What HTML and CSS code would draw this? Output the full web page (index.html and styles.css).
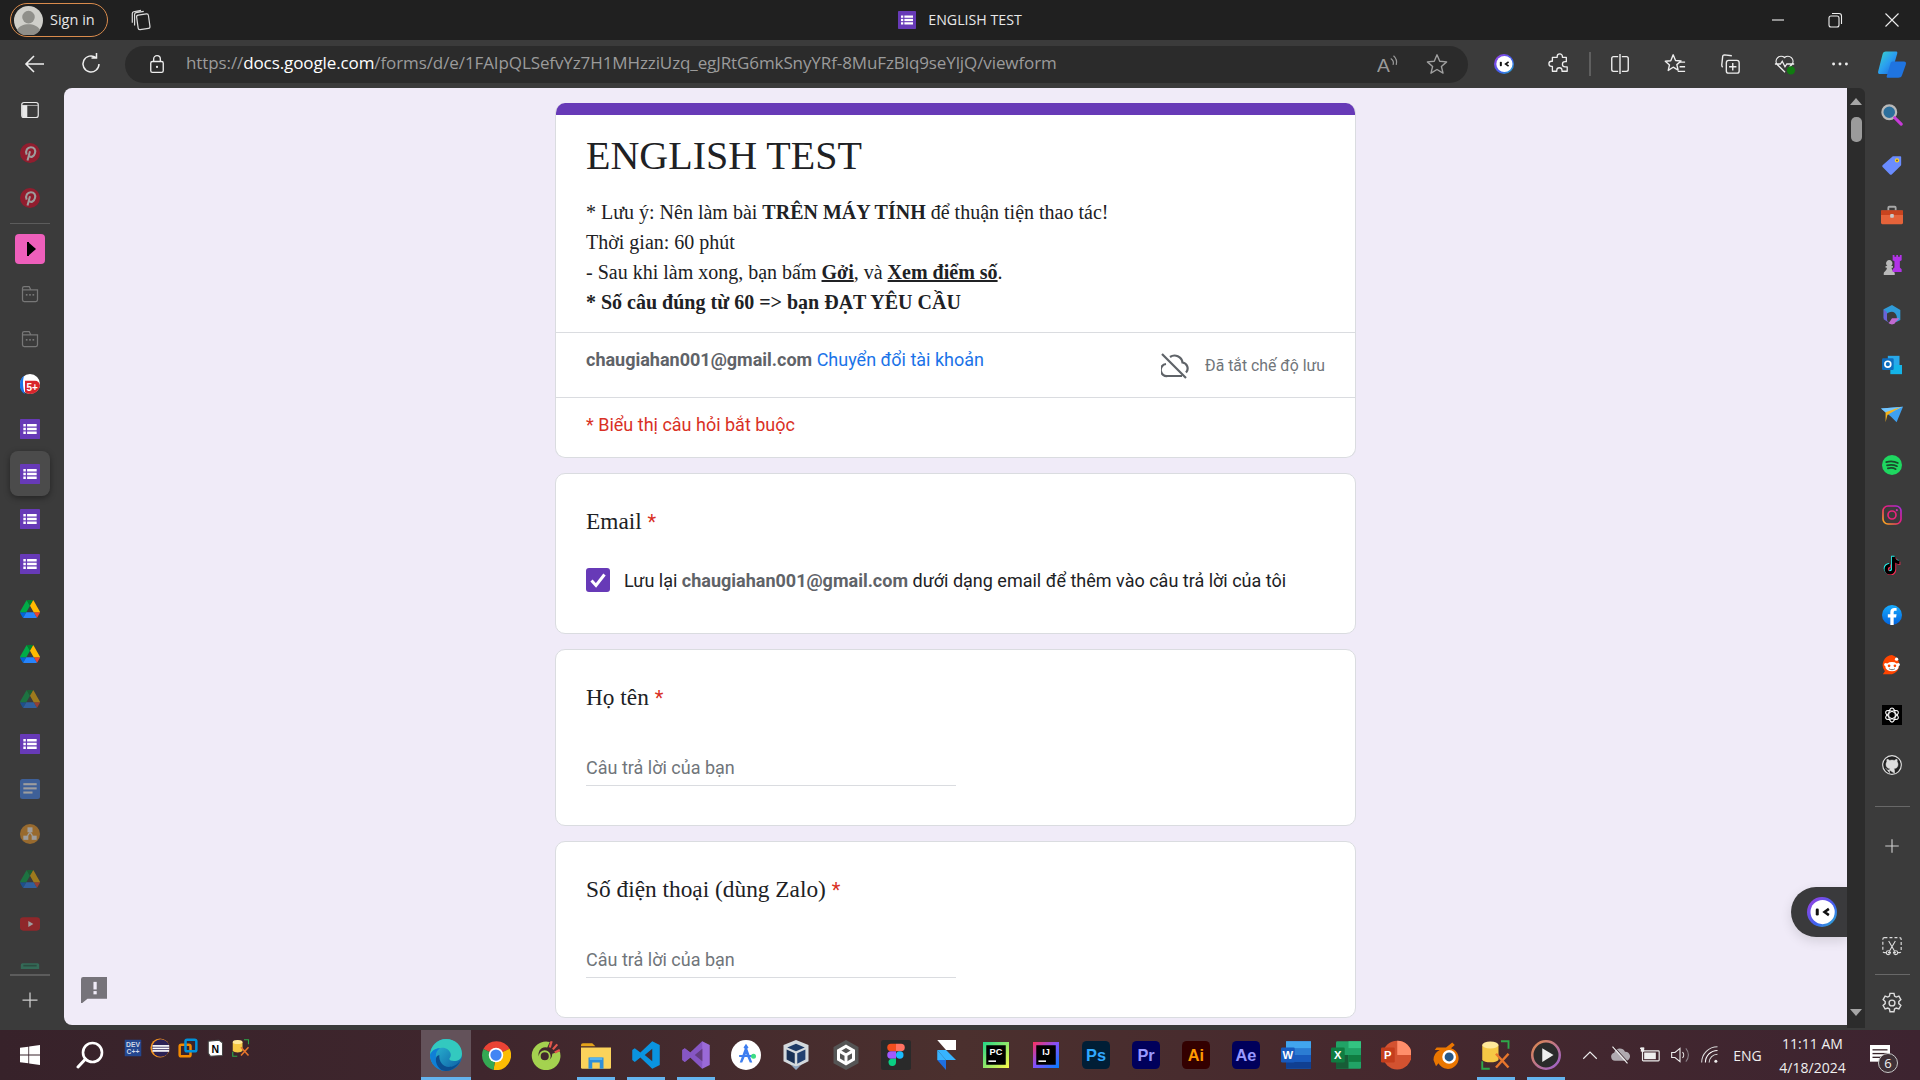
FILE: index.html
```html
<!DOCTYPE html>
<html lang="vi">
<head>
<meta charset="utf-8">
<title>ENGLISH TEST</title>
<link rel="stylesheet" href="styles.css">
</head>
<body>
<svg class="defs" aria-hidden="true">
<defs>
<linearGradient id="gEdge" x1="0" y1="0" x2="1" y2="1"><stop offset="0" stop-color="#2fc7d8"/><stop offset="1" stop-color="#0c59a4"/></linearGradient>
<linearGradient id="gCop" x1="0" y1="0" x2="1" y2="1"><stop offset="0" stop-color="#3ad6c8"/><stop offset=".5" stop-color="#2a9ef0"/><stop offset="1" stop-color="#1b5fd6"/></linearGradient>
<linearGradient id="gMas" x1="0" y1="0" x2="1" y2="1"><stop offset="0" stop-color="#a23ce0"/><stop offset=".6" stop-color="#3d62f0"/><stop offset="1" stop-color="#27b7c9"/></linearGradient>
<linearGradient id="gInsta" x1="0" y1="1" x2="1" y2="0"><stop offset="0" stop-color="#fdb913"/><stop offset=".5" stop-color="#ee1d79"/><stop offset="1" stop-color="#a32ce0"/></linearGradient>
<linearGradient id="gFb" x1="0" y1="0" x2="0" y2="1"><stop offset="0" stop-color="#18acfe"/><stop offset="1" stop-color="#0163e0"/></linearGradient>
<linearGradient id="gPC" x1="0" y1="0" x2="1" y2="1"><stop offset="0" stop-color="#21d789"/><stop offset="1" stop-color="#fcf84a"/></linearGradient>
<linearGradient id="gIJ" x1="0" y1="0" x2="1" y2="1"><stop offset="0" stop-color="#fe315d"/><stop offset=".5" stop-color="#7f52ff"/><stop offset="1" stop-color="#007efc"/></linearGradient>
<linearGradient id="gPlay" x1="0" y1="0" x2="1" y2="1"><stop offset="0" stop-color="#e08a4a"/><stop offset="1" stop-color="#9a5fd0"/></linearGradient>

<symbol id="i-forms" viewBox="0 0 24 24"><rect width="24" height="24" rx="1" fill="#673ab7"/><g fill="#fff"><rect x="4" y="6" width="3" height="3"/><rect x="4" y="10.500" width="3" height="3"/><rect x="4" y="15" width="3" height="3"/><rect x="8.500" y="6" width="11.500" height="3"/><rect x="8.500" y="10.500" width="11.500" height="3"/><rect x="8.500" y="15" width="11.500" height="3"/></g></symbol>
<symbol id="i-pin" viewBox="0 0 24 24"><circle cx="12" cy="12" r="12" fill="#e60023"/><path d="M9 21l3-11M8 14c-2-5 1-9 5-9s6 3 5 7-5 6-6.500 3.500" fill="none" stroke="#fff" stroke-width="2.400"/></symbol>
<symbol id="i-play" viewBox="0 0 30 30"><rect width="30" height="30" rx="4" fill="#ee5fbb"/><path d="M13 8l8 7-8 7z" fill="#000"/><rect x="12" y="8" width="2" height="14"/></symbol>
<symbol id="i-group" viewBox="0 0 24 24"><path d="M3 7V5a2 2 0 0 1 2-2h6l2 4h8v12a2 2 0 0 1-2 2H5a2 2 0 0 1-2-2V7h10" fill="none" stroke="#777" stroke-width="1.500"/><g fill="#777"><rect x="7" y="12" width="2" height="2"/><rect x="11" y="12" width="2" height="2"/><rect x="15" y="12" width="2" height="2"/></g></symbol>
<symbol id="i-vtabs" viewBox="0 0 24 24"><rect x="1" y="2" width="22" height="20" rx="3" fill="none" stroke="#e8e8e8" stroke-width="1.600"/><path d="M1.500 6H8v15.500H4A2.500 2.500 0 0 1 1.500 19zM1.500 6h21" fill="#e8e8e8" stroke="#e8e8e8" stroke-width=".8"/></symbol>
<symbol id="i-badge" viewBox="0 0 24 24"><circle cx="12" cy="12" r="12" fill="#fff"/><path d="M0 12a12 12 0 0 1 5-10c-2 5-2 14 1 22a12 12 0 0 1-6-12z" fill="#1a73e8"/><path d="M6 8h12a6 6 0 0 1 6 6 12 12 0 0 1-12 10 10 10 0 0 1-6-2z" fill="#d8252c"/><text x="14.500" y="20" class="svg-b" font-size="12" fill="#fff" text-anchor="middle">5+</text></symbol>
<symbol id="i-drive" viewBox="0 0 87.300 78"><path d="m6.600 66.850 3.850 6.650c.8 1.400 1.950 2.500 3.300 3.300l13.750-23.800h-27.500c0 1.550.4 3.100 1.200 4.500z" fill="#0066da"/><path d="m43.650 25-13.750-23.800c-1.350.8-2.500 1.900-3.300 3.300l-25.400 44a9.060 9.060 0 0 0 -1.200 4.500h27.500z" fill="#00ac47"/><path d="m73.550 76.800c1.350-.8 2.500-1.900 3.300-3.300l1.600-2.750 7.650-13.250c.8-1.400 1.200-2.950 1.200-4.500h-27.502l5.852 11.500z" fill="#ea4335"/><path d="m43.650 25 13.750-23.800c-1.350-.8-2.900-1.200-4.500-1.200h-18.500c-1.600 0-3.150.45-4.500 1.200z" fill="#00832d"/><path d="m59.800 53h-32.300l-13.750 23.800c1.350.8 2.900 1.200 4.500 1.200h50.800c1.600 0 3.150-.45 4.500-1.200z" fill="#2684fc"/><path d="m73.400 26.500-12.700-22c-.8-1.400-1.950-2.500-3.300-3.300l-13.750 23.800 16.150 28h27.450c0-1.550-.4-3.100-1.200-4.500z" fill="#ffba00"/></symbol>
<symbol id="i-docs" viewBox="0 0 24 24"><rect width="24" height="24" rx="3" fill="#4285f4"/><g fill="#fff"><rect x="4" y="5" width="16" height="2.500"/><rect x="4" y="10" width="16" height="2.500"/><rect x="4" y="15" width="11" height="2.500"/></g></symbol>
<symbol id="i-nodes" viewBox="0 0 24 24"><circle cx="12" cy="12" r="12" fill="#f59a23"/><g fill="#fff"><rect x="9" y="4" width="6" height="6"/><rect x="4" y="14" width="6" height="5"/><rect x="14" y="14" width="6" height="5"/><path d="M11 10h2l3 4h-2l-2-3-2 3H8z"/></g></symbol>
<symbol id="i-yt" viewBox="0 0 24 24"><rect y="4" width="24" height="16" rx="4" fill="#e3141b"/><path d="M10 8.500l6 3.500-6 3.500z" fill="#fff"/></symbol>
<symbol id="i-green" viewBox="0 0 24 24"><rect x="1" y="5" width="22" height="17" rx="2" fill="#2f9a74"/><rect x="4" y="7" width="16" height="2" fill="#1c5e46"/></symbol>

<symbol id="r-search" viewBox="0 0 24 24"><circle cx="9" cy="9" r="7.500" fill="#2c6f9c" stroke="#b9b9b9" stroke-width="2.400"/><path d="M15 15l7 7" stroke="#c73ad8" stroke-width="3.400" stroke-linecap="round"/></symbol>
<symbol id="r-tag" viewBox="0 0 24 24"><path d="M13 1.500h9a1 1 0 0 1 1 1v9a2 2 0 0 1-.6 1.400L12 23a2 2 0 0 1-2.800 0L1 14.800a2 2 0 0 1 0-2.800z" fill="#6a8cff"/><circle cx="18" cy="6.500" r="2.500" fill="#ffd21e"/><circle cx="18" cy="6.500" r="1" fill="#444"/></symbol>
<symbol id="r-tool" viewBox="0 0 24 24"><path d="M8 7V4a1 1 0 0 1 1-1h6a1 1 0 0 1 1 1v3" fill="none" stroke="#a8a8a8" stroke-width="2"/><rect y="7" width="24" height="15" rx="1.500" fill="#e5633a"/><rect y="7" width="24" height="5" fill="#c8441f"/><rect x="10" y="11" width="4" height="4" rx="1" fill="#c9c9c9"/></symbol>
<symbol id="r-chess" viewBox="0 0 24 24"><path d="M3 23v-2c0-2 3-2 3.500-6H5v-2h2a3.500 3.500 0 1 1 4 0h2v2h-1.500c.5 4 3.500 4 3.500 6v2z" fill="#b9b9b9"/><path d="M14 1h2v2h2V1h2v2h2V1h2v6l-2 1v7l2 2v3H14v-3l2-2V8l-2-1z" fill="#b233e8" transform="translate(-1 0) scale(.98)"/></symbol>
<symbol id="r-m365" viewBox="0 0 24 24"><path d="M12 0l10 6v12l-6 3c3-3 3-12-4-13-3 0-5 1-7 3l-3 5V5z" fill="#2f9bd8"/><path d="M2 5v12l6 4c3 2 5 3 8 0H9c-3-1-3-3-3-5V9z" fill="#6a62d8"/><path d="M16 21c-2 3-5 3-8 1l4-6h9z" fill="#c06ad0"/></symbol>
<symbol id="r-outlook" viewBox="0 0 24 24"><rect x="7" y="1" width="14" height="14" fill="#28a8ea"/><path d="M10 12l14 0v11H10z" fill="#14b4e8"/><rect y="4" width="14" height="14" rx="1.500" fill="#0f6cbd"/><circle cx="7" cy="11" r="3.500" fill="none" stroke="#fff" stroke-width="2"/></symbol>
<symbol id="r-plane" viewBox="0 0 24 24"><path d="M0 5l24-2-7 17-6-6z" fill="#3ea0f0"/><path d="M0 5l24-2L7 11z" fill="#74c6ff"/><path d="M5 9l17-6-15 9-2 8z" fill="#f5b41e"/></symbol>
<symbol id="r-spot" viewBox="0 0 24 24"><circle cx="12" cy="12" r="12" fill="#1ed760"/><g fill="none" stroke="#1a4a2a" stroke-width="2" stroke-linecap="round"><path d="M5 8.500c5-1.500 10-1 14 1.200M6 12.500c4-1 8.500-.8 12 1M7 16c3.500-.8 7-.5 9.500 1"/></g></symbol>
<symbol id="r-insta" viewBox="0 0 24 24"><rect x="1.200" y="1.200" width="21.600" height="21.600" rx="6" fill="#3b3b3b" stroke="url(#gInsta)" stroke-width="2"/><circle cx="12" cy="12" r="4.800" fill="none" stroke="#e8257b" stroke-width="2"/><circle cx="17.800" cy="6.200" r="1.300" fill="#c42fb0"/></symbol>
<symbol id="r-tiktok" viewBox="0 0 24 24"><path d="M12 2h4c0 3 2 5 5 5v4c-2 0-4-.7-5-2v8a6.500 6.500 0 1 1-6.500-6.500v4a2.500 2.500 0 1 0 2.500 2.500z" fill="#25f4ee" transform="translate(-1 -1)"/><path d="M12 2h4c0 3 2 5 5 5v4c-2 0-4-.7-5-2v8a6.500 6.500 0 1 1-6.500-6.500v4a2.500 2.500 0 1 0 2.500 2.500z" fill="#fe2c55" transform="translate(1 1)"/><path d="M12 2h4c0 3 2 5 5 5v4c-2 0-4-.7-5-2v8a6.500 6.500 0 1 1-6.500-6.500v4a2.500 2.500 0 1 0 2.500 2.500z" fill="#000"/></symbol>
<symbol id="r-fb" viewBox="0 0 24 24"><circle cx="12" cy="12" r="12" fill="url(#gFb)"/><path d="M10 24v-9H7v-4h3V8.500C10 5 12 3.500 15 3.500l2.500.2V7H16c-1.500 0-2 .8-2 2v2h3.500l-.6 4H14v9z" fill="#fff"/></symbol>
<symbol id="r-reddit" viewBox="0 0 24 24"><path d="M12 0a12 12 0 0 1 0 23H1l2.500-3.500A12 12 0 0 1 12 0z" fill="#ff4500"/><ellipse cx="12" cy="14" rx="8" ry="5.500" fill="#fff"/><circle cx="4.500" cy="11.500" r="2" fill="#fff"/><circle cx="19.500" cy="11.500" r="2" fill="#fff"/><circle cx="17.500" cy="5" r="2" fill="#fff"/><circle cx="8.500" cy="13" r="1.600" fill="#ff4500"/><circle cx="15.500" cy="13" r="1.600" fill="#ff4500"/><path d="M8.500 16.500c2 1.500 5 1.500 7 0" stroke="#555" fill="none"/></symbol>
<symbol id="r-gpt" viewBox="0 0 24 24"><rect width="24" height="24" fill="#000"/><g fill="none" stroke="#fff" stroke-width="1.300"><ellipse cx="12" cy="12" rx="4" ry="8.500"/><ellipse cx="12" cy="12" rx="4" ry="8.500" transform="rotate(60 12 12)"/><ellipse cx="12" cy="12" rx="4" ry="8.500" transform="rotate(120 12 12)"/></g></symbol>
<symbol id="r-git" viewBox="0 0 24 24"><circle cx="12" cy="12" r="11.200" fill="#222" stroke="#ddd" stroke-width="1.400"/><path d="M9 22v-4c-3 .5-4-1-4.500-2.500M15 22v-3.500c0-1-.4-1.500-.8-2 2.500-.3 5-1.200 5-5.300 0-1.200-.4-2.200-1.100-3 .1-.5.4-1.600-.1-3-1 0-2.200.6-3.200 1.300a11 11 0 0 0-5.600 0C8.200 5.800 7 5.200 6 5.200c-.5 1.400-.2 2.500-.1 3-.7.8-1.100 1.800-1.100 3 0 4 2.500 5 5 5.300-.4.400-.7 1-.8 1.500z" fill="#ddd" stroke="#ddd" stroke-width=".6"/></symbol>
<symbol id="r-snip" viewBox="0 0 24 24"><rect x="1" y="2" width="22" height="18" rx="2" fill="none" stroke="#ddd" stroke-width="1.400" stroke-dasharray="3.500 2.500"/><g fill="none" stroke="#ddd" stroke-width="1.300"><path d="M8 6l7 12M16 6L9 18"/><circle cx="7.500" cy="20" r="2.300"/><circle cx="16.500" cy="20" r="2.300"/></g></symbol>
<symbol id="r-gear" viewBox="0 0 24 24"><g fill="none" stroke="#ddd" stroke-width="1.500"><circle cx="12" cy="12" r="3.200"/><path d="M9.800 1.500h4.400l.6 3 1.800 1 2.900-1 2.200 3.800-2.300 2v2.400l2.300 2-2.200 3.800-2.900-1-1.800 1-.6 3H9.800l-.6-3-1.800-1-2.900 1-2.200-3.800 2.300-2v-2.400l-2.300-2 2.200-3.800 2.900 1 1.800-1z"/></g></symbol>
<symbol id="u-plus" viewBox="0 0 24 24"><path d="M12 3v18M3 12h18" stroke="#d0d0d0" stroke-width="1.500" fill="none"/></symbol>

<symbol id="t-tabs" viewBox="0 0 24 24"><g fill="none" stroke="#dcdcdc" stroke-width="1.300"><rect x="8" y="6" width="13" height="16" rx="2" transform="rotate(-8 14 14)"/><path d="M5 18V6c0-1 .6-1.800 1.600-2L15 2.500M2.500 15V5c0-1 .6-1.800 1.500-2l8-1.500"/></g></symbol>
<symbol id="t-back" viewBox="0 0 24 24"><path d="M21 12H3M11 4l-8 8 8 8" fill="none" stroke="#eee" stroke-width="1.600"/></symbol>
<symbol id="t-ref" viewBox="0 0 24 24"><path d="M20 12a8 8 0 1 1-3-6.300M17.500 1v5h-5" fill="none" stroke="#eee" stroke-width="1.500"/></symbol>
<symbol id="t-lock" viewBox="0 0 24 24"><path d="M8 9V6a4 4 0 0 1 8 0v3" fill="none" stroke="#eee" stroke-width="1.600"/><rect x="4.500" y="9" width="15" height="13" rx="2" fill="none" stroke="#eee" stroke-width="1.600"/><circle cx="12" cy="15.500" r="1.300" fill="#eee"/></symbol>
<symbol id="t-read" viewBox="0 0 24 24"><text x="0" y="21" class="svg-n" font-size="21" fill="#9a9a9a">A</text><path d="M15 6a6 6 0 0 1 2.500 7M18 3a10 10 0 0 1 3 10" fill="none" stroke="#9a9a9a" stroke-width="1.300"/></symbol>
<symbol id="t-star" viewBox="0 0 24 24"><path d="M12 2l3 7 7.500.7-5.700 5 1.800 7.300L12 18l-6.600 4 1.800-7.300-5.700-5L9 9z" fill="none" stroke="#a0a0a0" stroke-width="1.500" stroke-linejoin="round"/></symbol>
<symbol id="t-mascot" viewBox="0 0 24 24"><circle cx="12" cy="12" r="12" fill="url(#gMas)"/><circle cx="12.500" cy="12" r="9.700" fill="#fff"/><rect x="7" y="9.200" width="2.400" height="5.600" rx="1" fill="#111"/><path d="M17.500 9.500L14 12l3.500 2.500" fill="none" stroke="#111" stroke-width="2"/></symbol>
<symbol id="t-ext" viewBox="0 0 24 24"><path d="M9.500 6V5a3 3 0 0 1 6 0v1H20v5h-1.500a3 3 0 0 0 0 6H21v5H15v-1a3 3 0 0 0-6 0v1H4v-5.500H3a3 3 0 0 1 0-6h1V6z" fill="none" stroke="#eee" stroke-width="1.500" stroke-linejoin="round" transform="translate(1 -1) scale(.95)"/></symbol>
<symbol id="t-split" viewBox="0 0 24 24"><path d="M10 4H5a2 2 0 0 0-2 2v12a2 2 0 0 0 2 2h5M14 4h5a2 2 0 0 1 2 2v12a2 2 0 0 1-2 2h-5M12 1v22" fill="none" stroke="#eee" stroke-width="1.500"/></symbol>
<symbol id="t-fav" viewBox="0 0 24 24"><path d="M10 2l2.600 6.200 6 .5-4.600 4 1.400 6L10 15.500 4.600 19l1.400-6-4.600-4 6-.5z" fill="none" stroke="#eee" stroke-width="1.500" stroke-linejoin="round"/><path d="M17 10h6M17 15h6M15 20h8" stroke="#eee" stroke-width="1.500"/></symbol>
<symbol id="t-coll" viewBox="0 0 24 24"><path d="M14 3l-8-1a2 2 0 0 0-2 2L3 13c0 1 .4 1.800 1 2.500" fill="none" stroke="#eee" stroke-width="1.500"/><rect x="8" y="8" width="14" height="14" rx="2.500" fill="none" stroke="#eee" stroke-width="1.500"/><path d="M15 11v8M11 15h8" stroke="#eee" stroke-width="1.500"/></symbol>
<symbol id="t-health" viewBox="0 0 24 24"><path d="M12 21L3.500 12.500a5.500 5.500 0 0 1 8-7.500 5.500 5.500 0 0 1 8 7.500L17 15M1 12h6l2-3 3 6 2-3h8" fill="none" stroke="#eee" stroke-width="1.400"/><circle cx="18.500" cy="19" r="4.500" fill="#107c10"/></symbol>
<symbol id="t-dots" viewBox="0 0 24 24"><g fill="#eee"><circle cx="5" cy="12" r="1.600"/><circle cx="12" cy="12" r="1.600"/><circle cx="19" cy="12" r="1.600"/></g></symbol>
<symbol id="t-cop" viewBox="0 0 24 24"><path d="M7 2h8c1 0 1.500.5 1.200 1.500L12 18c-.5 1.500-1.500 2-3 2H2.500C1 20 .5 19 1 17.500L4.500 4C5 2.500 6 2 7 2z" fill="url(#gCop)"/><path d="M13 10h8.500c1.500 0 2 1 1.500 2.500L20 21c-.5 1.500-1.500 2-3 2H9c-1 0-1.500-.5-1.200-1.500l3-10c.3-1 1-1.500 2.200-1.500z" fill="#1f74e0"/></symbol>
<symbol id="t-min" viewBox="0 0 24 24"><path d="M6 12h12" stroke="#eee" stroke-width="1.100"/></symbol>
<symbol id="t-max" viewBox="0 0 24 24"><rect x="6" y="8" width="10" height="11" rx="2" fill="none" stroke="#eee" stroke-width="1.100"/><path d="M9 5.500h7a2.500 2.500 0 0 1 2.500 2.500v8" fill="none" stroke="#eee" stroke-width="1.100"/></symbol>
<symbol id="t-close" viewBox="0 0 24 24"><path d="M5.500 5.500l13 13M18.500 5.500l-13 13" stroke="#eee" stroke-width="1.100"/></symbol>
<symbol id="f-cloud" viewBox="0 0 28 26"><path d="M1 1l24 24M5 11A6 6 0 0 0 6.500 23H21M9 4A8 8 0 0 1 21.500 9.500 6 6 0 0 1 25 19.500" fill="none" stroke="#5f6368" stroke-width="2.200"/></symbol>
<symbol id="f-feed" viewBox="0 0 24 24"><path d="M2 0h22a1.500 1.500 0 0 1 1.500 1.500v17a1.500 1.500 0 0 1-1.500 1.500H6l-6 5V2a2 2 0 0 1 2-2z" fill="#76737a"/><rect x="11.500" y="4.500" width="3" height="7" fill="#f0ebf8"/><rect x="11.500" y="13" width="3" height="3" fill="#f0ebf8"/></symbol>

<symbol id="b-win" viewBox="0 0 24 24"><path d="M0 3.400l10-1.400v9.400H0zM11 1.900L24 0v11.400H11zM0 12.600h10V22L0 20.600zM11 12.600h13V24l-13-1.900z" fill="#fff"/></symbol>
<symbol id="b-search" viewBox="0 0 28 28"><circle cx="16.500" cy="11.500" r="9.500" fill="none" stroke="#fff" stroke-width="2.600"/><path d="M9.500 18L2 26" stroke="#fff" stroke-width="3" stroke-linecap="round"/></symbol>
<symbol id="b-dev" viewBox="0 0 24 24"><rect x="1" y="1" width="22" height="22" fill="#24478f"/><text x="12" y="10.500" class="svg-b" font-size="9" fill="#cfd8e8" text-anchor="middle">DEV</text><text x="12" y="20.500" class="svg-b" font-size="9" fill="#cfd8e8" text-anchor="middle">C++</text></symbol>
<symbol id="b-ecl" viewBox="0 0 24 24"><circle cx="12" cy="12" r="11.500" fill="#f7941e"/><circle cx="13" cy="12" r="10.500" fill="#2c2255"/><g fill="#fff"><rect x="3" y="8.500" width="20" height="2"/><rect x="3" y="11.500" width="20" height="2"/><rect x="3" y="14.500" width="20" height="2"/></g></symbol>
<symbol id="b-vm" viewBox="0 0 24 24"><g fill="none" stroke-width="3"><rect x="2" y="8" width="13" height="14" rx="2" stroke="#f38b00"/><rect x="9" y="2" width="13" height="14" rx="2" stroke="#0091da"/></g></symbol>
<symbol id="b-notion" viewBox="0 0 24 24"><path d="M3 3l14-1.500 5 3.500v17L6 23 3 19z" fill="#fff" stroke="#444" stroke-width="1.400"/><text x="12.500" y="18" class="svg-b" font-family="Liberation Serif" font-size="14" fill="#000" text-anchor="middle">N</text></symbol>
<symbol id="b-db" viewBox="0 0 24 24"><path d="M1 4a7 3 0 0 1 13 0v12a7 3 0 0 1-13 0z" fill="#f6c845"/><ellipse cx="7.500" cy="4" rx="6.500" ry="2.800" fill="#ffe89a"/><g fill="none" stroke="#2ea84a" stroke-width="1.500"><path d="M16 1h6v6M1 17v6h6"/></g><g stroke="#e8762c" stroke-width="2" fill="none"><path d="M12 11l10 11M22 11L12 22"/></g></symbol>

<symbol id="a-edge" viewBox="0 0 24 24"><circle cx="12" cy="12" r="12" fill="url(#gEdge)"/><path d="M0 12C1 4 7 0 12 0c7 0 12 5 12 11 0 4-3 5.500-6 5.500-2 0-3.500-.6-3.500-1.500 0-1 1.500-1.500 1-4-.5-2.500-3-4.500-6.500-4.500C5 6.500 1 9 0 12z" fill="#33c9bf"/><path d="M0 12c1-3 4-5 7.500-5C5 8.500 4 11 4.500 14c.7 4 4 7.500 9 9.800A12 12 0 0 1 0 12z" fill="#0f7fd6"/><path d="M7 12c-.5 5 3 9 7 9 3 0 6-1 9-5-2 4-6 8-11 8-1 0-2-.2-3-.5-3.500-2-5-6-4.500-9 .3-1.300 1.200-2.300 2.500-2.500z" fill="#0b4e90"/></symbol>
<symbol id="a-chrome" viewBox="0 0 24 24"><path d="M12 12L1.900 7.200A12 12 0 0 1 22.900 7z" fill="#ea4335"/><path d="M12 12l10.900-5A12 12 0 0 1 10 23.900z" fill="#fbbc04"/><path d="M12 12l-2 11.900A12 12 0 0 1 1.900 7.200z" fill="#34a853"/><circle cx="12" cy="12" r="5.800" fill="#fff"/><circle cx="12" cy="12" r="4.500" fill="#4285f4"/></symbol>
<symbol id="a-coc" viewBox="0 0 24 24"><path d="M15 1.500A11.500 11.500 0 1 0 23 9l-6 2a5.500 5.500 0 1 1-4-5z" fill="#a4d24f"/><circle cx="11" cy="13" r="4" fill="none" stroke="#a4d24f" stroke-width="1.500"/><path d="M15 6l1.500-5M17.500 7.500L21 3.500M19 10l4-2" stroke="#e2574c" stroke-width="1.800"/></symbol>
<symbol id="a-folder" viewBox="0 0 24 24"><path d="M0 4a1.500 1.500 0 0 1 1.500-1.500H9l2.500 2.500H0z" fill="#e5a41a"/><path d="M0 6h24v16a1 1 0 0 1-1 1H1a1 1 0 0 1-1-1z" fill="#fbd35b"/><path d="M6 23V14h12v9h-3v-5H9v5z" fill="#2f8fd8"/><rect x="7" y="14" width="10" height="2" fill="#55b5f0"/></symbol>
<symbol id="a-vsc" viewBox="0 0 24 24"><path d="M17 1l6 3v16l-6 3L7.500 14 3 17.500 1 16V8l2-1.500L7.500 10zM17 7l-6 5 6 5z" fill-rule="evenodd" fill="#0a94e0"/></symbol>
<symbol id="a-vs" viewBox="0 0 24 24"><path d="M17 1l6 3v16l-6 3L7.500 14 3 17.500 1 16V8l2-1.500L7.500 10zM17 7l-6 5 6 5z" fill-rule="evenodd" fill="#9a6ad8"/><path d="M17 1L7.500 10 3 6.500 1 8v8l2 1.500L7.500 14 17 23z" fill="#7a4ab8" opacity=".6"/></symbol>
<symbol id="a-android" viewBox="0 0 24 24"><circle cx="12" cy="12" r="12" fill="#fff"/><path d="M12 3l2 3-1 1 4 11h-2l-3-7-3 7H7l4-11-1-1z" fill="#3d7ef0"/><rect x="6.500" y="12" width="11" height="1.600" fill="#3d7ef0"/><circle cx="18" cy="13" r="2" fill="#3ddc84"/></symbol>
<symbol id="a-vbox" viewBox="0 0 24 24"><path d="M12 0l10 4v13l-10 5L2 17V4z" fill="#d4d9dd"/><path d="M12 3l7 3-7 3-7-3z" fill="#1d3a66"/><path d="M4.500 7.500L11 10.500V19l-6.500-3.500z" fill="#183055"/><path d="M19.500 7.500L13 10.500V19l6.500-3.500z" fill="#224070"/><path d="M8 20l4 4 4-4-4 1z" fill="#8fa6c0"/></symbol>
<symbol id="a-unity" viewBox="0 0 24 24"><path d="M12 0l10 5.500v13L12 24 2 18.500v-13z" fill="#555"/><path d="M12 5l6 3.500v7L12 19l-6-3.500v-7z" fill="none" stroke="#fff" stroke-width="2.400"/><path d="M12 12V19M12 12l6-3.500M12 12L6 8.500" stroke="#fff" stroke-width="2.400"/></symbol>
<symbol id="a-figma" viewBox="0 0 24 24"><rect width="24" height="24" rx="2" fill="#2a2a2a"/><path d="M8 3h4v6H8a3 3 0 0 1 0-6z" fill="#f24e1e"/><path d="M12 3h4a3 3 0 0 1 0 6h-4z" fill="#ff7262"/><path d="M8 9h4v6H8a3 3 0 0 1 0-6z" fill="#a259ff"/><circle cx="15" cy="12" r="3" fill="#1abcfe"/><path d="M8 15h4v3a3 3 0 1 1-4-3z" fill="#0acf83"/></symbol>
<symbol id="a-framer" viewBox="0 0 24 24"><path d="M5 0h15v8H12z" fill="#fff"/><path d="M5 8h7l8 8H12z" fill="#37b4ff"/><path d="M5 8v8h7z" fill="#37b4ff"/><path d="M5 16h7v8z" fill="#1e6fe0"/></symbol>
<symbol id="a-pc" viewBox="0 0 24 24"><rect width="24" height="24" fill="url(#gPC)"/><rect x="3" y="3" width="18" height="18" fill="#000"/><text x="12" y="12" class="svg-b" font-size="8.500" fill="#fff" text-anchor="middle">PC</text><rect x="5" y="17" width="7" height="1.400" fill="#fff"/></symbol>
<symbol id="a-ij" viewBox="0 0 24 24"><rect width="24" height="24" fill="url(#gIJ)"/><rect x="3" y="3" width="18" height="18" fill="#000"/><text x="12" y="12" class="svg-b" font-size="8.500" fill="#fff" text-anchor="middle">IJ</text><rect x="5" y="17" width="7" height="1.400" fill="#fff"/></symbol>
<symbol id="a-ps" viewBox="0 0 24 24"><rect width="24" height="24" rx="4" fill="#001e36"/><text x="12" y="17" class="svg-b" font-size="14" fill="#31a8ff" text-anchor="middle">Ps</text></symbol>
<symbol id="a-pr" viewBox="0 0 24 24"><rect width="24" height="24" rx="4" fill="#00005b"/><text x="12" y="17" class="svg-b" font-size="14" fill="#9999ff" text-anchor="middle">Pr</text></symbol>
<symbol id="a-ai" viewBox="0 0 24 24"><rect width="24" height="24" rx="4" fill="#330000"/><text x="12" y="17" class="svg-b" font-size="14" fill="#ff9a00" text-anchor="middle">Ai</text></symbol>
<symbol id="a-ae" viewBox="0 0 24 24"><rect width="24" height="24" rx="4" fill="#00005b"/><text x="12" y="17" class="svg-b" font-size="14" fill="#9999ff" text-anchor="middle">Ae</text></symbol>
<symbol id="a-word" viewBox="0 0 24 24"><rect x="4" y="1" width="20" height="22" rx="1" fill="#2b7cd3"/><rect x="4" y="1" width="20" height="5.500" fill="#41a5ee"/><rect x="4" y="12" width="20" height="5.500" fill="#185abd"/><rect x="4" y="17.500" width="20" height="5.500" fill="#103f91"/><rect y="6" width="11" height="12" rx="1" fill="#185abd"/><text x="5.500" y="15.500" class="svg-b" font-size="9" fill="#fff" text-anchor="middle">W</text></symbol>
<symbol id="a-excel" viewBox="0 0 24 24"><rect x="4" y="1" width="20" height="22" rx="1" fill="#21a366"/><rect x="14" y="1" width="10" height="5.500" fill="#33c481"/><rect x="4" y="12" width="10" height="11" fill="#185c37"/><rect x="14" y="12" width="10" height="5.500" fill="#107c41"/><rect y="6" width="11" height="12" rx="1" fill="#107c41"/><text x="5.500" y="15.500" class="svg-b" font-size="9" fill="#fff" text-anchor="middle">X</text></symbol>
<symbol id="a-ppt" viewBox="0 0 24 24"><circle cx="13" cy="12" r="11.500" fill="#d35230"/><path d="M13 .5A11.500 11.500 0 0 1 24.500 12H13z" fill="#ff8f6b"/><rect y="6" width="11" height="12" rx="1" fill="#c43e1c"/><text x="5.500" y="15.500" class="svg-b" font-size="9" fill="#fff" text-anchor="middle">P</text></symbol>
<symbol id="a-blend" viewBox="0 0 24 24"><path d="M2 16a9 9 0 0 1 5-8H3l1.500-2H12l5-4 2 2-3 2.500a8.500 8.500 0 1 1-10 12L4 21z" fill="#ea7600"/><circle cx="14.500" cy="13.500" r="5.500" fill="#fff"/><circle cx="14.500" cy="13.500" r="3.600" fill="#265787"/></symbol>
<symbol id="a-player" viewBox="0 0 24 24"><circle cx="12" cy="12" r="11" fill="#2b2b2b" stroke="url(#gPlay)" stroke-width="2"/><path d="M9 6.500l9 5.500-9 5.500z" fill="#eee"/></symbol>

<symbol id="s-chev" viewBox="0 0 24 24"><path d="M3 17l9-9 9 9" fill="none" stroke="#eee" stroke-width="1.500"/></symbol>
<symbol id="s-cloud" viewBox="0 0 24 24"><path d="M6 19a5 5 0 0 1-1-9.800A7 7 0 0 1 18 8a5.500 5.500 0 0 1 1 11z" fill="#b0aab0"/><path d="M3 2l18 20" stroke="#eee" stroke-width="1.400"/><path d="M5 2l18 20" stroke="#38242a" stroke-width="1"/></symbol>
<symbol id="s-batt" viewBox="0 0 24 24"><rect x="3" y="7" width="20" height="12" rx="1" fill="none" stroke="#eee" stroke-width="1.400"/><rect x="5" y="9" width="14" height="8" fill="#eee"/><path d="M0 4h5" stroke="#eee" stroke-width="1.500"/><rect x="1" y="3" width="4" height="5" fill="#eee"/></symbol>
<symbol id="s-vol" viewBox="0 0 24 24"><path d="M2 9h4l6-5v16l-6-5H2z" fill="none" stroke="#eee" stroke-width="1.300"/><path d="M15 8.500a5 5 0 0 1 0 7" fill="none" stroke="#eee" stroke-width="1.300"/><path d="M19 4a12 12 0 0 1 0 16" fill="none" stroke="#8a8088" stroke-width="1.300"/></symbol>
<symbol id="s-wifi" viewBox="0 0 24 24"><g fill="none" stroke="#d8d8d8" stroke-width="1.300"><path d="M2 21A19 19 0 0 1 21 2"/><path d="M6.500 21A14.500 14.500 0 0 1 21 6.500" stroke="#fff"/><path d="M11 21a10 10 0 0 1 10-10"/></g><circle cx="19" cy="19.500" r="1.800" fill="#eee"/></symbol>
<symbol id="s-note" viewBox="0 0 24 24"><rect x="0" y="0" width="24" height="20" fill="#fff"/><g fill="#38242a"><rect x="3" y="5" width="18" height="1.600"/><rect x="3" y="9.500" width="18" height="1.600"/><rect x="3" y="14" width="12" height="1.600"/></g></symbol>
</defs>
</svg>

<header class="titlebar">
  <div class="title-left">
    <div class="signin">
      <span class="avatar"><svg viewBox="0 0 30 30"><circle cx="15" cy="15" r="15" fill="#cfcfca"/><circle cx="15" cy="11.500" r="6.500" fill="#8f8f8a"/><path d="M3 25c2-4 7-6 12-6s10 2 12 6a15 15 0 0 1-24 0z" fill="#8f8f8a"/></svg></span>
      <span class="signin-label">Sign in</span>
    </div>
    <svg class="ic tabs-ic"><use href="#t-tabs"/></svg>
  </div>
  <div class="title-center">
    <svg class="ic ic-18"><use href="#i-forms"/></svg>
    <span class="title-text">ENGLISH TEST</span>
  </div>
  <div class="win-controls">
    <span class="win-btn"><svg class="ic ic-24"><use href="#t-min"/></svg></span>
    <span class="win-btn"><svg class="ic ic-24"><use href="#t-max"/></svg></span>
    <span class="win-btn"><svg class="ic ic-24"><use href="#t-close"/></svg></span>
  </div>
</header>

<nav class="toolbar">
  <span class="tool-btn"><svg class="ic ic-24"><use href="#t-back"/></svg></span>
  <span class="tool-btn"><svg class="ic ic-24"><use href="#t-ref"/></svg></span>
  <div class="address">
    <svg class="ic ic-20"><use href="#t-lock"/></svg>
    <div class="url"><span class="url-dim">https://</span><span class="url-host">docs.google.com</span><span class="url-dim">/forms/d/e/1FAIpQLSefvYz7H1MHzziUzq_egJRtG6mkSnyYRf-8MuFzBlq9seYljQ/viewform</span></div>
    <svg class="ic ic-22 read-ic"><use href="#t-read"/></svg>
    <svg class="ic ic-22 star-ic"><use href="#t-star"/></svg>
  </div>
  <span class="tool-btn tool-r"><svg class="ic ic-20"><use href="#t-mascot"/></svg></span>
  <span class="tool-btn tool-r"><svg class="ic ic-22"><use href="#t-ext"/></svg></span>
  <span class="tool-sep"></span>
  <span class="tool-btn tool-r"><svg class="ic ic-22"><use href="#t-split"/></svg></span>
  <span class="tool-btn tool-r"><svg class="ic ic-22"><use href="#t-fav"/></svg></span>
  <span class="tool-btn tool-r"><svg class="ic ic-22"><use href="#t-coll"/></svg></span>
  <span class="tool-btn tool-r"><svg class="ic ic-22"><use href="#t-health"/></svg></span>
  <span class="tool-btn tool-r"><svg class="ic ic-22"><use href="#t-dots"/></svg></span>
  <span class="copilot"><svg class="ic ic-30"><use href="#t-cop"/></svg></span>
</nav>

<div class="main">
  <aside class="side-left">
    <div class="side-list">
      <span class="s-btn s-first"><svg class="ic ic-18"><use href="#i-vtabs"/></svg></span>
      <span class="s-btn dim"><svg class="ic ic-20"><use href="#i-pin"/></svg></span>
      <span class="s-btn dim"><svg class="ic ic-20"><use href="#i-pin"/></svg></span>
      <span class="s-sep s-sep-top"></span>
      <span class="s-btn"><svg class="ic ic-30"><use href="#i-play"/></svg></span>
      <span class="s-btn"><svg class="ic ic-20"><use href="#i-group"/></svg></span>
      <span class="s-btn"><svg class="ic ic-20"><use href="#i-group"/></svg></span>
      <span class="s-btn"><svg class="ic ic-20"><use href="#i-badge"/></svg></span>
      <span class="s-btn"><svg class="ic ic-20"><use href="#i-forms"/></svg></span>
      <span class="s-btn s-active"><svg class="ic ic-20"><use href="#i-forms"/></svg></span>
      <span class="s-btn"><svg class="ic ic-20"><use href="#i-forms"/></svg></span>
      <span class="s-btn"><svg class="ic ic-20"><use href="#i-forms"/></svg></span>
      <span class="s-btn"><svg class="ic ic-20"><use href="#i-drive"/></svg></span>
      <span class="s-btn"><svg class="ic ic-20"><use href="#i-drive"/></svg></span>
      <span class="s-btn dim"><svg class="ic ic-20"><use href="#i-drive"/></svg></span>
      <span class="s-btn"><svg class="ic ic-20"><use href="#i-forms"/></svg></span>
      <span class="s-btn dim"><svg class="ic ic-20"><use href="#i-docs"/></svg></span>
      <span class="s-btn dim"><svg class="ic ic-20"><use href="#i-nodes"/></svg></span>
      <span class="s-btn dim"><svg class="ic ic-20"><use href="#i-drive"/></svg></span>
      <span class="s-btn dim"><svg class="ic ic-20"><use href="#i-yt"/></svg></span>
      <span class="s-btn dim"><svg class="ic ic-20"><use href="#i-green"/></svg></span>
    </div>
    <span class="s-sep s-sep-bottom"></span>
    <span class="s-btn s-add"><svg class="ic ic-20"><use href="#u-plus"/></svg></span>
  </aside>

  <main class="viewport">
    <div class="form">
      <section class="card card-head">
        <div class="band"></div>
        <h1 class="form-title">ENGLISH TEST</h1>
        <div class="desc">
          <p>* Lưu ý: Nên làm bài <b>TRÊN MÁY TÍNH</b> để thuận tiện thao tác!</p>
          <p>Thời gian: 60 phút</p>
          <p>- Sau khi làm xong, bạn bấm <b class="u">Gởi</b>, và <b class="u">Xem điểm số</b>.</p>
          <p><b>* Số câu đúng từ 60 =&gt; bạn ĐẠT YÊU CẦU</b></p>
        </div>
        <div class="account">
          <div class="account-id"><b>chaugiahan001@gmail.com</b> <span class="link">Chuyển đổi tài khoản</span></div>
          <div class="saved"><svg class="ic cloud-ic"><use href="#f-cloud"/></svg><span>Đã tắt chế độ lưu</span></div>
        </div>
        <div class="required">* Biểu thị câu hỏi bắt buộc</div>
      </section>

      <section class="card card-email">
        <div class="q-label">Email <span class="star">*</span></div>
        <div class="check-row">
          <span class="check"><svg viewBox="0 0 24 24"><path d="M5.500 12.500l4.500 5 8.500-11" fill="none" stroke="#fff" stroke-width="3"/></svg></span>
          <span>Lưu lại <b>chaugiahan001@gmail.com</b> dưới dạng email để thêm vào câu trả lời của tôi</span>
        </div>
      </section>

      <section class="card card-q">
        <div class="q-label">Họ tên <span class="star">*</span></div>
        <div class="answer">Câu trả lời của bạn</div>
      </section>

      <section class="card card-q">
        <div class="q-label">Số điện thoại (dùng Zalo) <span class="star">*</span></div>
        <div class="answer">Câu trả lời của bạn</div>
      </section>
    </div>
    <svg class="ic feedback"><use href="#f-feed"/></svg>
    <div class="float-pill"><svg class="ic ic-30"><use href="#t-mascot"/></svg></div>
  </main>

  <div class="scrollbar">
    <span class="arrow-up"></span>
    <span class="thumb"></span>
    <span class="arrow-down"></span>
  </div>

  <aside class="side-right">
    <span class="r-btn"><svg class="ic ic-22"><use href="#r-search"/></svg></span>
    <span class="r-btn"><svg class="ic ic-20"><use href="#r-tag"/></svg></span>
    <span class="r-btn"><svg class="ic ic-22"><use href="#r-tool"/></svg></span>
    <span class="r-btn"><svg class="ic ic-22"><use href="#r-chess"/></svg></span>
    <span class="r-btn"><svg class="ic ic-20"><use href="#r-m365"/></svg></span>
    <span class="r-btn"><svg class="ic ic-20"><use href="#r-outlook"/></svg></span>
    <span class="r-btn"><svg class="ic ic-22"><use href="#r-plane"/></svg></span>
    <span class="r-btn"><svg class="ic ic-20"><use href="#r-spot"/></svg></span>
    <span class="r-btn"><svg class="ic ic-20"><use href="#r-insta"/></svg></span>
    <span class="r-btn"><svg class="ic ic-20"><use href="#r-tiktok"/></svg></span>
    <span class="r-btn"><svg class="ic ic-20"><use href="#r-fb"/></svg></span>
    <span class="r-btn"><svg class="ic ic-20"><use href="#r-reddit"/></svg></span>
    <span class="r-btn"><svg class="ic ic-20"><use href="#r-gpt"/></svg></span>
    <span class="r-btn"><svg class="ic ic-20"><use href="#r-git"/></svg></span>
    <span class="r-sep r-sep-a"></span>
    <span class="r-btn"><svg class="ic ic-18"><use href="#u-plus"/></svg></span>
    <span class="r-btn r-push"><svg class="ic ic-20"><use href="#r-snip"/></svg></span>
    <span class="r-sep"></span>
    <span class="r-btn"><svg class="ic ic-22"><use href="#r-gear"/></svg></span>
  </aside>
</div>

<footer class="taskbar">
  <div class="tb-left">
    <svg class="ic ic-20 tb-win"><use href="#b-win"/></svg>
    <svg class="ic ic-28 tb-search"><use href="#b-search"/></svg>
    <div class="tb-mini">
      <svg class="ic ic-18"><use href="#b-dev"/></svg>
      <svg class="ic ic-20"><use href="#b-ecl"/></svg>
      <svg class="ic ic-20"><use href="#b-vm"/></svg>
      <svg class="ic ic-18"><use href="#b-notion"/></svg>
      <svg class="ic ic-18"><use href="#b-db"/></svg>
    </div>
  </div>
  <div class="apps">
    <span class="app app-active"><svg class="ic ic-32"><use href="#a-edge"/></svg></span>
    <span class="app"><svg class="ic ic-30"><use href="#a-chrome"/></svg></span>
    <span class="app"><svg class="ic ic-30"><use href="#a-coc"/></svg></span>
    <span class="app app-open"><svg class="ic ic-30"><use href="#a-folder"/></svg></span>
    <span class="app app-open"><svg class="ic ic-30"><use href="#a-vsc"/></svg></span>
    <span class="app app-open"><svg class="ic ic-30"><use href="#a-vs"/></svg></span>
    <span class="app"><svg class="ic ic-30"><use href="#a-android"/></svg></span>
    <span class="app"><svg class="ic ic-30"><use href="#a-vbox"/></svg></span>
    <span class="app"><svg class="ic ic-30"><use href="#a-unity"/></svg></span>
    <span class="app"><svg class="ic ic-30"><use href="#a-figma"/></svg></span>
    <span class="app"><svg class="ic ic-30"><use href="#a-framer"/></svg></span>
    <span class="app"><svg class="ic ic-26"><use href="#a-pc"/></svg></span>
    <span class="app"><svg class="ic ic-26"><use href="#a-ij"/></svg></span>
    <span class="app"><svg class="ic ic-28"><use href="#a-ps"/></svg></span>
    <span class="app"><svg class="ic ic-28"><use href="#a-pr"/></svg></span>
    <span class="app"><svg class="ic ic-28"><use href="#a-ai"/></svg></span>
    <span class="app"><svg class="ic ic-28"><use href="#a-ae"/></svg></span>
    <span class="app"><svg class="ic ic-30"><use href="#a-word"/></svg></span>
    <span class="app"><svg class="ic ic-30"><use href="#a-excel"/></svg></span>
    <span class="app"><svg class="ic ic-30"><use href="#a-ppt"/></svg></span>
    <span class="app"><svg class="ic ic-30"><use href="#a-blend"/></svg></span>
    <span class="app app-open"><svg class="ic ic-30"><use href="#b-db"/></svg></span>
    <span class="app app-open"><svg class="ic ic-30"><use href="#a-player"/></svg></span>
  </div>
  <div class="tray">
    <span class="tray-ic"><svg class="ic ic-18"><use href="#s-chev"/></svg></span>
    <span class="tray-ic"><svg class="ic ic-20"><use href="#s-cloud"/></svg></span>
    <span class="tray-ic"><svg class="ic ic-20"><use href="#s-batt"/></svg></span>
    <span class="tray-ic"><svg class="ic ic-20"><use href="#s-vol"/></svg></span>
    <span class="tray-ic"><svg class="ic ic-20"><use href="#s-wifi"/></svg></span>
    <span class="tray-lang">ENG</span>
    <div class="clock"><span>11:11 AM</span><span>4/18/2024</span></div>
    <div class="notif"><svg class="ic ic-20"><use href="#s-note"/></svg><span class="notif-count">6</span></div>
  </div>
</footer>
</body>
</html>
```
FILE: styles.css
```css
* { box-sizing: border-box; }
html, body { margin: 0; padding: 0; }
body {
  width: 1920px;
  height: 1080px;
  overflow: hidden;
  display: flex;
  flex-direction: column;
  background: #3b3b3b;
  font-family: "Open Sans", "Noto Sans", sans-serif;
  color: #fff;
}
.defs { position: absolute; width: 0; height: 0; }
.svg-b { font-family: "Liberation Sans", sans-serif; font-weight: 700; }
.svg-n { font-family: "Liberation Sans", sans-serif; }
.ic { display: block; flex: none; }
.ic-18 { width: 18px; height: 18px; }
.ic-20 { width: 20px; height: 20px; }
.ic-22 { width: 22px; height: 22px; }
.ic-24 { width: 24px; height: 24px; }
.ic-26 { width: 26px; height: 26px; }
.ic-28 { width: 28px; height: 28px; }
.ic-30 { width: 30px; height: 30px; }
.ic-32 { width: 32px; height: 32px; }
.cloud-ic { width: 28px; height: 26px; }

/* title bar */
.titlebar {
  height: 40px;
  flex: none;
  display: grid;
  grid-template-columns: 1fr auto 1fr;
  align-items: center;
  background: #202020;
}
.title-left { display: flex; align-items: center; padding-left: 10px; }
.signin {
  width: 98px;
  height: 34px;
  display: flex;
  align-items: center;
  gap: 7px;
  padding-left: 3px;
  border: 1.5px solid #d98b4c;
  border-radius: 17px;
}
.avatar { width: 29px; height: 29px; display: block; }
.avatar svg { display: block; width: 100%; height: 100%; }
.signin-label { font-size: 14.500px; color: #e6e6e6; padding-bottom: 2px; }
.tabs-ic { width: 22px; height: 22px; margin-left: 22px; }
.title-center { display: flex; align-items: center; gap: 12px; font-size: 14.200px; color: #e8e8e8; }
.title-text { padding-bottom: 2px; }
.win-controls { display: flex; justify-content: flex-end; }
.win-btn { width: 57px; height: 40px; display: flex; align-items: center; justify-content: center; }

/* toolbar */
.toolbar {
  height: 48px;
  flex: none;
  display: flex;
  align-items: center;
  padding-left: 7px;
  background: #3b3b3b;
}
.tool-btn { width: 56px; height: 48px; display: flex; align-items: center; justify-content: center; flex: none; }
.tool-r { width: 55px; }
.tool-sep { width: 2px; height: 24px; margin: 0 1px 0 3px; background: #5f5f5f; flex: none; }
.copilot { width: 50px; display: flex; justify-content: center; }
.address {
  width: 1343px;
  height: 37px;
  margin: 0 8px 0 6px;
  padding-left: 22px;
  display: flex;
  align-items: center;
  border-radius: 19px;
  background: #2b2b2b;
  flex: none;
}
.url { margin-left: 19px; flex: 1; font-size: 17px; line-height: 24px; padding-bottom: 2px; white-space: nowrap; overflow: hidden; letter-spacing: -.1px; }
.url-dim { color: #9b9b9b; }
.url-host { color: #fff; }
.read-ic { margin-right: 27px; }
.star-ic { margin-right: 20px; }

/* main row */
.main { flex: 1; min-height: 0; display: flex; }
.side-left {
  width: 64px;
  flex: none;
  display: flex;
  flex-direction: column;
  align-items: center;
  padding-right: 4px;
  background: #3b3b3b;
}
.side-list { flex: 1; min-height: 0; width: 100%; overflow: hidden; display: flex; flex-direction: column; align-items: center; padding-top: 1px; }
.s-btn { width: 40px; height: 45px; flex: none; display: flex; align-items: center; justify-content: center; border-radius: 8px; }
.s-first { height: 41px; }
.s-sep { width: 40px; flex: none; background: #5c5c5c; }
.s-sep-top { height: 1px; margin: 3px 0 2px; }
.s-sep-bottom { height: 2px; margin-top: 5px; }
.s-add { height: 48px; margin-bottom: 6px; }
.s-active { background: #4b4b4b; box-shadow: 0 2px 6px rgba(0, 0, 0, .4); }
.dim .ic { opacity: .5; }

.viewport {
  position: relative;
  flex: 1;
  min-width: 0;
  margin-bottom: 5px;
  overflow: hidden;
  background: #f0ebf8;
  border-radius: 8px 0 0 8px;
  padding-top: 15px;
}
.form {
  width: 801px;
  margin: 0 auto;
  display: flex;
  flex-direction: column;
  gap: 15px;
  font-family: Roboto, "Liberation Sans", sans-serif;
  font-size: 18px;
  color: #202124;
}
.card {
  flex: none;
  background: #fff;
  border: 1px solid #dadce0;
  border-radius: 10px;
}
.card-head { height: 355px; position: relative; border-top: 0; overflow: hidden; }
.band { height: 12px; margin: 0 -1px; background: #673ab7; }
.form-title {
  margin: 0;
  padding: 16px 0 0 30px;
  height: 66px;
  font: 400 40px/50px "Liberation Serif", serif;
  color: #202124;
}
.desc {
  height: 151px;
  padding: 16px 0 0 30px;
  font: 400 20px/30px "Liberation Serif", serif;
  color: #202124;
}
.desc p { margin: 0; }
.u { text-decoration: underline; }
.account {
  height: 66px;
  padding: 0 30px;
  display: flex;
  justify-content: space-between;
  border-top: 1px solid #dadce0;
  border-bottom: 1px solid #dadce0;
  line-height: 20px;
}
.account-id { padding-top: 17px; color: #5f6368; }
.link { color: #1a73e8; }
.saved { display: flex; align-items: center; gap: 16px; font-size: 15.800px; color: #70757a; padding-top: 1px; }
.required { padding: 17px 0 0 30px; line-height: 20px; color: #d93025; }
.card-email { height: 161px; padding: 34px 30px 0; }
.card-q { height: 177px; padding: 34px 30px 0; }
.q-label { font: 400 23.350px/27px "Liberation Serif", serif; color: #202124; }
.star { color: #d93025; font: 400 20px/20px Roboto, sans-serif; }
.check-row { display: flex; align-items: center; gap: 14px; margin-top: 33px; color: #202124; }
.check-row b { color: #5f6368; }
.check { width: 24px; height: 24px; border-radius: 3px; background: #673ab7; flex: none; }
.check svg { display: block; width: 100%; height: 100%; }
.answer {
  width: 370px;
  margin-top: 40px;
  height: 35px;
  padding-top: 5px;
  line-height: 24px;
  color: #70757a;
  border-bottom: 1px solid #dadce0;
}
.feedback { position: absolute; left: 17px; bottom: 22px; width: 26px; height: 26px; }
.float-pill {
  position: absolute;
  right: 0;
  top: 799px;
  width: 56px;
  height: 50px;
  padding-left: 16px;
  display: flex;
  align-items: center;
  background: #3a3a3c;
  border-radius: 25px 0 0 25px;
  box-shadow: 0 4px 12px rgba(0, 0, 0, .12);
}

/* scrollbar */
.scrollbar {
  width: 18px;
  flex: none;
  margin-bottom: 2px;
  display: flex;
  flex-direction: column;
  align-items: center;
  background: #2c2c2c;
  border-radius: 0 6px 0 0;
  padding-top: 10px;
}
.arrow-up { width: 0; height: 0; border-left: 6.500px solid transparent; border-right: 6.500px solid transparent; border-bottom: 7px solid #a6a6a6; }
.thumb { width: 11px; height: 25px; margin-top: 12px; border-radius: 5px; background: #9b9b9b; }
.arrow-down { width: 0; height: 0; margin-top: auto; margin-bottom: 12px; border-left: 6.500px solid transparent; border-right: 6.500px solid transparent; border-top: 7px solid #a6a6a6; }

.side-right {
  width: 55px;
  flex: none;
  display: flex;
  flex-direction: column;
  align-items: center;
  padding: 2px 1px 2px 0;
  background: #3b3b3b;
}
.r-btn { width: 40px; height: 50px; flex: none; display: flex; align-items: center; justify-content: center; }
.r-sep { width: 35px; height: 1px; background: #686868; flex: none; margin-bottom: 3px; margin-top: 3px; }
.r-sep-a { margin-top: 16px; margin-bottom: 14px; }
.r-push { margin-top: auto; }

/* taskbar */
.taskbar {
  height: 50px;
  flex: none;
  display: flex;
  background: linear-gradient(90deg, #37222a 0%, #3f262d 25%, #4b302e 50%, #46292e 70%, #3d2430 100%);
}
.tb-left { width: 421px; flex: none; display: flex; align-items: center; }
.tb-win { margin-left: 20px; }
.tb-search { margin-left: 36px; }
.tb-mini { display: flex; align-items: center; gap: 8px; margin-left: 20px; align-self: flex-start; padding-top: 8px; }
.apps { display: flex; flex: none; }
.app { width: 50px; height: 50px; display: flex; align-items: center; justify-content: center; flex: none; position: relative; }
.app-active { background: #63525a; }
.app-active::after, .app-open::after {
  content: "";
  position: absolute;
  bottom: 0;
  height: 3px;
  background: #64b4ee;
}
.app-active::after { left: 0; right: 0; }
.app-open::after { left: 6px; right: 6px; }
.tray { display: flex; align-items: center; margin-left: 4px; font-size: 14px; color: #f0f0f0; }
.tray-ic { width: 30px; display: flex; justify-content: center; }
.tray-lang { width: 45px; text-align: center; }
.clock { width: 85px; display: flex; flex-direction: column; align-items: center; gap: 3px; line-height: 21px; }
.notif { position: relative; width: 50px; display: flex; justify-content: center; }
.notif-count {
  position: absolute;
  left: 23px;
  top: 8px;
  width: 20px;
  height: 20px;
  border-radius: 50%;
  background: #3f3137;
  border: 1px solid #c8c8c8;
  font-size: 13px;
  line-height: 18px;
  text-align: center;
}
```
